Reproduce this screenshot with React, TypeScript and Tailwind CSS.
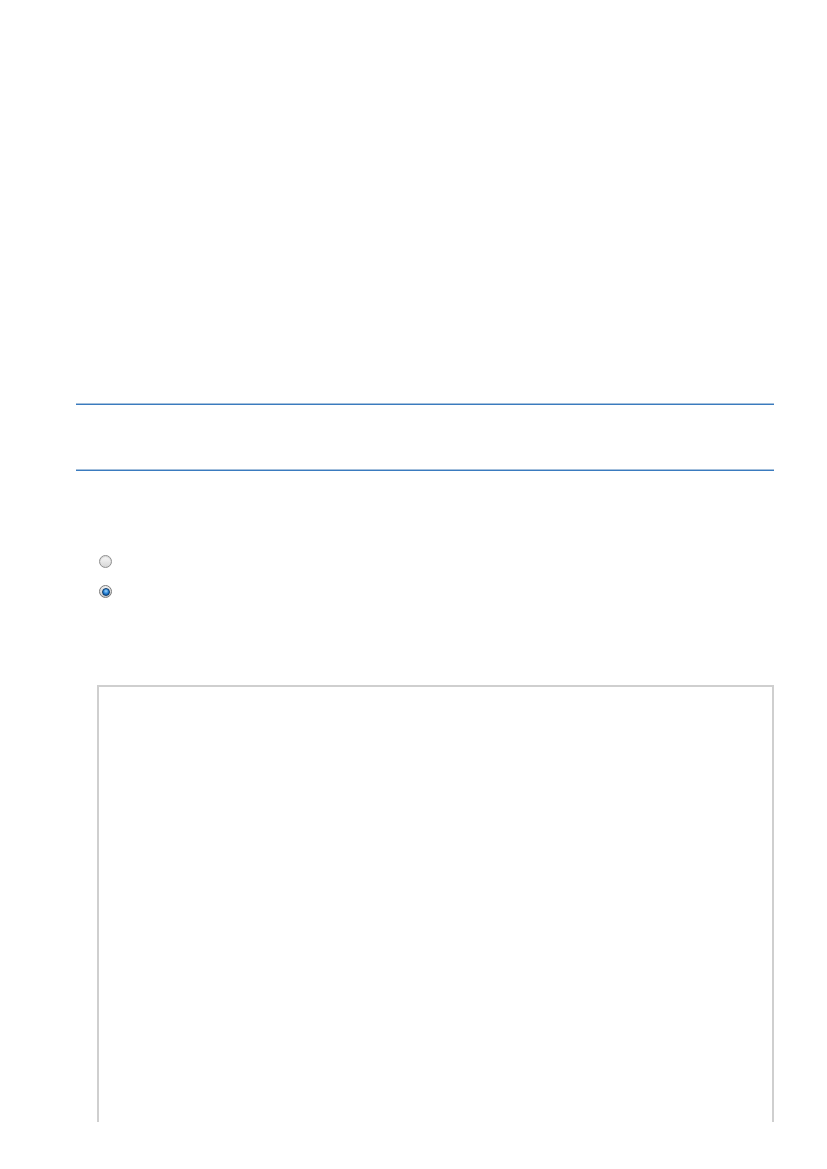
import React from "react";

// Aqua-style radio drawn with CSS gradients
const Radio: React.FC<{ checked?: boolean }> = ({ checked }) => {
  return checked ? (
    <span className="flex h-[13px] w-[13px] items-center justify-center rounded-full border border-[#7a7a7a] bg-[linear-gradient(#f0f0f0,#c8c8c8)]">
      <span className="h-[8px] w-[8px] rounded-full border border-[#0a3a6a] bg-[radial-gradient(circle_at_50%_35%,#9ad6ff,#1f7ad0_55%,#0b4a8e)]" />
    </span>
  ) : (
    <span className="block h-[13px] w-[13px] rounded-full border border-[#8e8e8e] bg-[linear-gradient(#fafafa,#d6d6d6)] shadow-[inset_0_1px_1px_rgba(0,0,0,0.15)]" />
  );
};

// Two-tone section rule
const Rule: React.FC = () => (
  <div className="flex flex-col">
    <div className="h-px bg-[#a3bfdc]" />
    <div className="h-px bg-[#3a7bbf]" />
  </div>
);

export default function App() {
  return (
    <div className="h-[1169px] w-[827px] overflow-hidden bg-white font-['Liberation_Sans',sans-serif]">
      <div className="ml-[76px] mr-[53px] pt-[403px]">
        <Rule />
        <div className="h-[64px]" />
        <Rule />

        <div className="flex flex-col gap-[17px] pl-[23px] pt-[84px]">
          <Radio />
          <Radio checked />
        </div>

        <div className="ml-[21px] mt-[87px] h-[437px] border-x-2 border-t-2 border-[#cfcfcf]" />
      </div>
    </div>
  );
}
